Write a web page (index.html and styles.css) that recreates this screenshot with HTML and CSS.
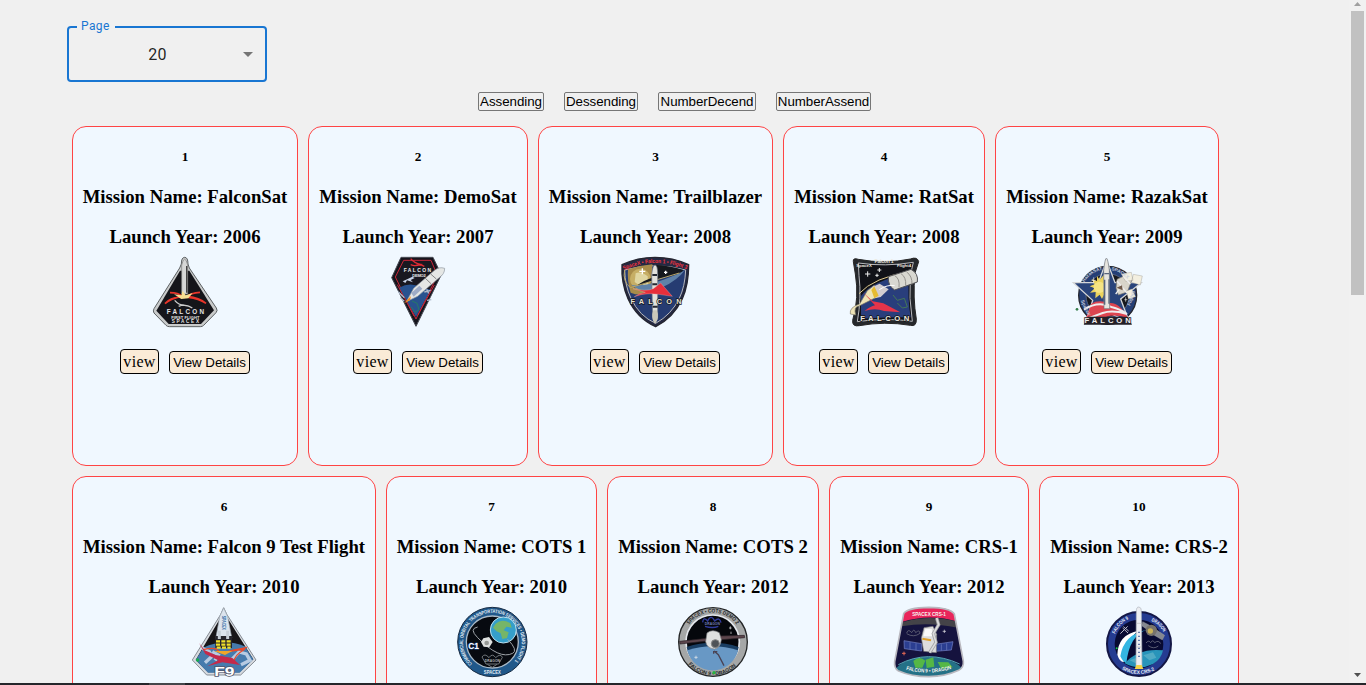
FILE: index.html
```html
<!DOCTYPE html>
<html lang="en">
<head>
<meta charset="utf-8">
<title>Missions</title>
<link rel="stylesheet" href="styles.css">
</head>
<body>
<main class="page">
  <div class="select"><span class="select-label">Page</span><span class="select-value">20</span><svg class="caret" viewBox="0 0 24 24"><path d="M7 10l5 5 5-5z"/></svg></div>
  <div class="sorts"><button class="s1">Assending</button><button class="s2">Dessending</button><button class="s3">NumberDecend</button><button class="s4">NumberAssend</button></div>
  <div class="row">
    <article class="card w226"><h5>1</h5><h3>Mission Name: FalconSat</h3><h3>Launch Year: 2006</h3>
      <svg class="patch" viewBox="0 0 270 255">
        <path d="M124 42Q124 22 134 22Q144 22 144 42L148 54L229 174Q234 182 228 188L191 226Q187 230 181 230H88Q82 230 78 226L42 189Q38 183 42 176L119 54Z" fill="#c9cbcb" stroke="#5c6062" stroke-width="3"/>
        <path d="M120 62H148L222 181L183 222H86L49 182Z" fill="#15151a"/>
        <path d="M125 45Q134 10 143 45V132H125Z" fill="#d6d7d6" stroke="#777" stroke-width="2"/><path d="M140 48V128" stroke="#444" stroke-width="4"/>
        <path d="M90 128Q115 128 126 139Q92 145 75 161Q93 140 122 142M180 127Q151 129 143 139Q178 143 198 160Q176 145 145 142" fill="none" stroke="#e8352a" stroke-width="5"/>
        <path d="M102 133L124 136L128 122L137 136L158 129L145 145L124 147Z" fill="#f8df92"/>
        <path d="M104 151Q116 165 133 166Q147 167 157 174Q135 160 116 169" fill="none" stroke="#ccc" stroke-width="4"/>
        <g fill="#e6e6e6" text-anchor="middle" class="lettering"><text x="136" y="192" font-size="19" textLength="112">FALCON</text><text x="136" y="206" font-size="12" textLength="84">FIRST FLIGHT</text><text x="136" y="220" font-size="14" textLength="82">SPACEX</text></g>
      </svg>
      <div class="actions"><button class="view">view</button><button class="details">View Details</button></div></article>
    <article class="card w220"><h5>2</h5><h3>Mission Name: DemoSat</h3><h3>Launch Year: 2007</h3>
      <svg class="patch" viewBox="-6 0 270 255">
        <path d="M78 22H174L199 74L123 229L50 83Z" fill="#15151d" stroke="#494b55" stroke-width="3"/>
        <path d="M86 31H168L187 76L123 207L61 81Z" fill="#191820" stroke="#c92639" stroke-width="3"/>
        <path d="M72 113Q105 95 137 111L167 119L123 201Z" fill="#28528f"/><path d="M67 104L117 198M178 105L128 196" stroke="#c92639" stroke-width="3"/>
        <path d="M107 26Q118 40 137 43Q120 50 107 44M118 48Q132 41 148 49" fill="none" stroke="#e12b34" stroke-width="4"/>
        <path d="M83 94L98 87L112 80L119 84L107 90L114 97L96 91L91 99Z" fill="#c9d5e9"/>
        <path d="M94 155L116 115L177 62Q192 49 209 55Q209 72 194 82L128 139Z" fill="#e5e7e5" stroke="#8d969e" stroke-width="2"/><path d="M109 129L133 107L142 116L116 140Z" fill="#9eacc7"/><path d="M151 85L168 101M167 72L184 87" stroke="#555" stroke-width="2"/><path d="M87 160L108 138L105 151Z" fill="#ef8b20"/>
        <path d="M111 153L126 160L132 179L120 187L108 170" fill="none" stroke="#267b66" stroke-width="3"/><path d="M148 126L167 121M155 118L161 130M70 125L88 143M76 143L88 154M156 151L169 149" stroke="#b0bbcc" stroke-width="4"/>
        <g fill="#eee" text-anchor="middle" class="lettering"><text x="127" y="67" font-size="15" textLength="82">FALCON</text><text x="132" y="80" font-size="12" textLength="40">DEMO2</text></g>
      </svg><div class="actions"><button class="view">view</button><button class="details">View Details</button></div></article>
    <article class="card w235"><h5>3</h5><h3>Mission Name: Trailblazer</h3><h3>Launch Year: 2008</h3>
      <svg class="patch" viewBox="2 0 270 255">
        <path d="M35 44Q82 22 134 22Q188 22 235 44Q235 104 216 146Q190 202 136 230Q80 205 53 146Q32 98 35 44Z" fill="#242943" stroke="#252630" stroke-width="4"/>
        <path d="M43 60Q134 34 226 60Q224 109 207 145Q183 194 136 220Q87 199 62 145Q44 108 43 60Z" fill="#263c72" stroke="#b7b9be" stroke-width="3"/>
        <path d="M53 58Q50 94 61 128Q103 145 123 112L126 43Q89 46 53 58Z" fill="#a88c4a"/><circle cx="90" cy="87" r="31" fill="#c6ae65"/><path d="M76 70Q92 62 112 79L113 104Q97 115 73 96Z" fill="#e0d6a1"/>
        <path d="M129 44Q180 46 219 60L207 75Q158 77 70 114Q101 88 143 78Z" fill="#16191e"/><path d="M62 104Q115 114 222 62Q203 89 156 112Q97 134 62 104Z" fill="#5f82a8"/><path d="M43 60Q36 94 60 113L207 69" stroke="#b8a66a" fill="none" stroke-width="3"/>
        <path d="M124 75Q127 45 134 45Q142 45 142 75V208Q135 219 127 208Z" fill="#e2e2dd" stroke="#6c7481" stroke-width="2"/><path d="M126 75H140M126 103H140M127 170H142" stroke="#252933" stroke-width="6"/><path d="M129 181Q120 203 134 222Q149 203 139 181Z" fill="#cbc9bb"/>
        <path d="M68 116Q107 125 129 116L151 99L186 139L145 133Q105 127 72 140Q86 130 105 127Z" fill="#e72f3b" stroke="#e9b7b5" stroke-width="1"/><path d="M96 55V73M87 64H105M166 62V72M161 67H171" stroke="#fff" stroke-width="4"/>
        <path id="arc3" d="M40 60Q137 18 231 59" fill="none"/><text class="lettering" font-size="17" fill="#f5343d"><textPath href="#arc3" textLength="194" lengthAdjust="spacingAndGlyphs">SpaceX • Falcon 1 • Flight 3</textPath></text><text class="lettering" x="137" y="163" text-anchor="middle" textLength="153" font-size="22" fill="#e8e3d4" stroke="#151923" stroke-width="4">FALCON</text>
      </svg><div class="actions"><button class="view">view</button><button class="details">View Details</button></div></article>
    <article class="card w202"><h5>4</h5><h3>Mission Name: RatSat</h3><h3>Launch Year: 2008</h3>
      <svg class="patch" viewBox="-3 0 270 255">
        <path d="M40 35Q38 22 55 28Q135 43 211 27Q232 19 236 35L225 69Q218 144 229 207Q230 231 211 226Q134 213 58 227Q36 231 38 211Q58 144 46 72Z" fill="#25282c" stroke="#262626" stroke-width="3"/>
        <path d="M55 39Q135 51 220 37L211 76Q206 145 217 214Q136 202 52 215Q65 143 57 77Z" fill="#111218" stroke="#b8b9bd" stroke-width="3"/>
        <path d="M63 138Q96 93 207 70Q202 151 212 202Q135 200 63 206Z" fill="#293e7c"/><path d="M57 131Q100 83 211 64" stroke="#dfc98e" stroke-width="3" fill="none"/>
        <path d="M31 192Q27 172 59 162L82 122L103 106L113 140L91 151L57 168Q40 170 47 195Z" fill="#eee4b6" stroke="#7f7967" stroke-width="2"/><path d="M97 111L119 101L146 118L122 141L104 145Z" fill="#d3cdd0"/><path d="M103 109L116 137L103 145L94 120Z" fill="#e6bb31"/>
        <path d="M145 80L213 58Q236 70 232 96L164 120Q143 108 145 80Z" fill="#d8d8d1" stroke="#505156" stroke-width="3"/><path d="M164 77Q180 85 177 112M183 71Q199 81 197 107M200 66Q217 78 216 103" stroke="#94928d" stroke-width="3" fill="none"/><path d="M118 119Q142 103 164 107" fill="none" stroke="#fff" stroke-width="3"/>
        <path d="M68 126L98 154L130 160L181 187L132 183Q105 173 74 183Q91 169 105 166Z" fill="#e5344a"/><path d="M159 135L172 151L193 145L202 171L187 174L172 159" stroke="#437756" fill="none" stroke-width="3"/><path d="M83 64V80M75 72H91M118 54V66M112 60H124M111 71V81M106 76H116" stroke="#eee" stroke-width="3"/>
        <g fill="#eeeae0" text-anchor="middle" class="lettering"><text x="132" y="38" font-size="15" textLength="57">Falcon 1</text><text x="72" y="52" font-size="13">SpaceX</text><text x="192" y="50" font-size="13">Flight4</text><text x="134" y="213" font-size="23" textLength="147" stroke="#151515" stroke-width="4">FALCON</text></g>
      </svg><div class="actions"><button class="view">view</button><button class="details">View Details</button></div></article>
    <article class="card w224"><h5>5</h5><h3>Mission Name: RazakSat</h3><h3>Launch Year: 2009</h3>
      <svg class="patch" viewBox="0 0 270 255">
        <circle cx="137" cy="136" r="87" fill="#243f76" stroke="#24252e" stroke-width="4"/><circle cx="137" cy="136" r="65" fill="#17191e" stroke="#6d7894" stroke-width="2"/>
        <path d="M34 98H109L134 31L159 98H238L176 147L202 217L135 186L70 221L92 151Z" fill="#29447b" stroke="#d5d7d8" stroke-width="4"/>
        <path d="M127 73L113 89L105 78V93L89 88L98 103L83 109L98 115L84 128L101 126L100 145L113 134L120 147L128 130Z" fill="#ebd35d"/><circle cx="112" cy="112" r="17" fill="#f5e483"/>
        <path d="M73 202L88 161Q108 148 143 159Q174 157 199 206Q150 184 104 214Z" fill="#dd4550"/><path d="M66 179Q109 151 151 172Q171 176 195 192Q151 179 122 189L78 205" fill="none" stroke="#eeeced" stroke-width="6"/>
        <path d="M125 61Q133 -12 142 61L143 176H126Z" fill="#e7e5df" stroke="#696f79" stroke-width="2"/><path d="M127 71H141M128 89V164M141 88V161" stroke="#57647b" stroke-width="4"/>
        <path d="M165 88L192 75L209 91L196 126L169 135L162 114Z" fill="#d9d5ca" stroke="#77766f" stroke-width="2"/><path d="M178 72L208 67L213 91L191 94ZM214 73L241 78L235 105L208 97ZM193 123L209 117L221 140L199 147Z" fill="#f3efe0" stroke="#88857e"/><path d="M165 93L195 129M184 79L205 102M171 119L161 132" stroke="#eee" stroke-width="4"/><path d="M164 113L180 106L182 121Z" fill="#705948"/>
        <path id="arc5a" d="M67 97Q86 65 122 60" fill="none"/><path id="arc5b" d="M148 60Q187 70 208 101" fill="none"/><g class="lettering" fill="#c4ccda" font-size="14"><text><textPath href="#arc5a">RazakSAT</textPath></text><text><textPath href="#arc5b">SPACEX</textPath></text><text x="54" y="156" transform="rotate(65 58 156)">SpaceX</text><text x="204" y="168" transform="rotate(-70 204 168)">Flight5</text></g>
        <path d="M78 200H197L210 224H65Z" fill="#211f27"/><text class="lettering" x="137" y="219" text-anchor="middle" textLength="139" font-size="23" fill="#eee" stroke="#29242b" stroke-width="5">FALCON</text><path d="M95 82V100M89 91H101M191 142V155M187 149H196" stroke="#eee" stroke-width="2"/><circle cx="45" cy="178" r="4" fill="#347d4a"/>
      </svg><div class="actions"><button class="view">view</button><button class="details">View Details</button></div></article>
  </div>
  <div class="row">
    <article class="card w304"><h5>6</h5><h3>Mission Name: Falcon 9 Test Flight</h3><h3>Launch Year: 2010</h3>
      <svg class="patch" viewBox="-3 0 270 255">
        <path d="M121 45L131 23L141 44L228 180L182 225H80L37 180Z" fill="#d8dce1" stroke="#858b93" stroke-width="3"/><path d="M124 49L131 33L139 49L220 178L178 217H84L47 180Z" fill="#171518"/><path d="M70 143Q132 112 194 139L220 178L179 218H84L47 180Z" fill="#467bad"/><path d="M67 145L88 155L96 169L75 188M97 155L115 165L105 181M157 177L177 156L199 162L210 181L183 194" fill="none" stroke="#b7cbe2" stroke-width="10"/>
        <path d="M119 50L131 24L143 50L155 112L148 143H114L108 112Z" fill="#dce4ed" stroke="#9da7b0" stroke-width="2"/><text x="127" y="47" class="lettering" transform="rotate(90 127 47)" font-size="15" textLength="43" lengthAdjust="spacingAndGlyphs" fill="#326ca6">SPACEX</text><path d="M106 108H156V144H106Z" fill="#25242b"/><path d="M108 124H154M108 134H154M110 143H152" stroke="#efe02a" stroke-width="7" stroke-dasharray="12 4"/><path d="M118 92V117M143 92V117" stroke="#c7cfd8" stroke-width="9"/>
        <path d="M70 149Q112 138 117 157M201 142Q155 151 143 155L195 147Q160 168 163 185" fill="none" stroke="#e94a2a" stroke-width="4"/><path d="M102 153H157L135 165Z" fill="#f0a629"/><path d="M57 129L74 151L107 165L157 174L180 195L127 187L82 199L115 181L76 162Z" fill="#c42a4a"/><circle cx="53" cy="180" r="5" fill="#17ae4d"/><text x="133" y="227" text-anchor="middle" font-size="36" textLength="61" lengthAdjust="spacingAndGlyphs" class="lettering" fill="#fff" stroke="#51566b" stroke-width="4">F9</text>
      </svg></article>
    <article class="card w211"><h5>7</h5><h3>Mission Name: COTS 1</h3><h3>Launch Year: 2010</h3>
      <svg class="patch" viewBox="-1 0 270 255"><circle cx="135" cy="126" r="104" fill="#20588a" stroke="#172b43" stroke-width="3"/><circle cx="135" cy="126" r="78" fill="#070a10" stroke="#a9b9c7" stroke-width="4"/><circle cx="168" cy="90" r="39" fill="#359fca" stroke="#bde0ee" stroke-width="3"/><path d="M145 71Q164 54 189 70L193 83L177 80L169 91L184 97L179 114L165 117L160 100L148 94L137 83Z" fill="#76b568"/><path d="M91 81Q64 86 91 113Q156 180 196 160Q213 151 181 118" fill="none" stroke="#9fa4a9" stroke-width="3"/><path d="M108 115L125 111L136 126L126 142L109 140L101 126Z" fill="#dfe1e0"/><circle cx="118" cy="129" r="7" fill="#969895"/>
      <text x="63" y="147" font-size="27" textLength="32" lengthAdjust="spacingAndGlyphs" class="lettering" fill="#fff" stroke="#274a8b" stroke-width="3">C1</text><path d="M104 171Q112 158 125 173Q135 158 145 173Q160 159 165 172L154 192H116ZM120 193L135 202L149 193" fill="none" stroke="#70767a" stroke-width="3"/><text class="lettering" x="135" y="186" text-anchor="middle" font-size="10" textLength="46" fill="#b5b9bc">DRAGON</text>
      <path id="arc7" d="M75 191A88 88 0 1 1 195 191" fill="none"/><text class="lettering" font-size="15" fill="#e2edf5"><textPath href="#arc7" textLength="410" lengthAdjust="spacingAndGlyphs">COMMERCIAL ORBITAL TRANSPORTATION SERVICES • DEMO FLIGHT 1</textPath></text><text class="lettering" x="135" y="223" text-anchor="middle" font-size="15" textLength="51" lengthAdjust="spacingAndGlyphs" fill="#e2edf5">SPACEX</text></svg></article>
    <article class="card w212"><h5>8</h5><h3>Mission Name: COTS 2</h3><h3>Launch Year: 2012</h3>
      <svg class="patch" viewBox="0 0 270 255"><circle cx="135" cy="126" r="103" fill="#a5a7a7" stroke="#232526" stroke-width="4"/><circle cx="134" cy="125" r="80" fill="#05070c" stroke="#e4e8ed" stroke-width="5"/><path d="M56 141Q134 116 212 141A79 79 0 0 1 56 141Z" fill="#193e63"/><path d="M58 151Q134 126 210 151A78 78 0 0 1 58 151Z" fill="#6898c5"/><path d="M35 124L117 115V123L36 132ZM151 108L229 106L230 113L152 120Z" fill="#5c454c" stroke="#281f26" stroke-width="2"/><path d="M117 99Q133 86 154 98L160 119Q157 145 139 147Q117 145 113 125Z" fill="#dedfdf" stroke="#828486" stroke-width="2"/><circle cx="142" cy="131" r="12" fill="#4f5358" stroke="#858585" stroke-width="3"/><path d="M138 153L151 164L168 197M137 153V161M138 155H148" fill="none" stroke="#4a4354" stroke-width="4"/><path d="M104 67Q106 48 119 63Q129 41 140 63Q155 49 159 68M111 79Q134 86 151 79" fill="none" stroke="#303b9c" stroke-width="4"/><text class="lettering" x="133" y="75" text-anchor="middle" font-size="10" textLength="45" fill="#737db7">DRAGON</text><path d="M187 79V88M183 84H191M189 95V102M84 167V177M79 172H89" stroke="#eee" stroke-width="2"/>
      <path id="arc8" d="M63 74A88 88 0 0 1 207 76" fill="none"/><path id="arc8b" d="M61 193A99 99 0 0 0 209 193" fill="none"/><g class="lettering" font-size="16" fill="#252729"><text><textPath href="#arc8" textLength="166" lengthAdjust="spacingAndGlyphs">SPACEX • COTS DEMO 2</textPath></text><text><textPath href="#arc8b" textLength="160" lengthAdjust="spacingAndGlyphs">FALCON 9 • DRAGON</textPath></text></g><circle cx="138" cy="218" r="5" fill="#24b443"/></svg></article>
    <article class="card w200"><h5>9</h5><h3>Mission Name: CRS-1</h3><h3>Launch Year: 2012</h3>
      <svg class="patch" viewBox="-3 0 270 255"><defs><clipPath id="crs"><path d="M56 41Q66 23 132 22Q196 23 208 42L235 184Q237 202 221 211Q180 230 132 230Q80 230 39 212Q27 204 29 185Z"/></clipPath></defs><g clip-path="url(#crs)"><path d="M20 20H240V230H20Z" fill="#15133e"/><path d="M45 20H220V65Q133 39 50 66Z" fill="#e9255b"/><path d="M51 67Q131 43 214 64L218 83Q130 64 50 79Z" fill="#444348"/><ellipse cx="132" cy="224" rx="106" ry="53" fill="#247187"/><path d="M85 183Q103 166 121 182L112 203L91 203ZM122 179L145 172L148 200L125 204ZM158 186L190 187L203 202L169 207Z" fill="#55b745"/><path d="M40 194Q128 147 224 192" fill="none" stroke="#57a9b6" stroke-width="3"/></g>
      <path d="M57 122L110 131V153L58 146ZM151 133L204 125L199 150L151 154Z" fill="#2b3e91" stroke="#7484c7" stroke-width="2"/><path d="M75 127V148M93 130V151M169 133V152M185 130V151" stroke="#7180bf" stroke-width="2"/><path d="M117 83L144 79L155 103L154 158L116 154L109 114Z" fill="#ddd" stroke="#777" stroke-width="2"/><path d="M121 87L140 87L143 109H115Z" fill="#fafafa"/><path d="M112 116L138 121" stroke="#e0a02b" stroke-width="6"/><path d="M155 54L161 74L145 101L153 127L134 158" stroke="#a2a3a6" stroke-width="10" fill="none"/><path d="M155 54L161 74L145 101L153 127L134 158" stroke="#ddd" stroke-width="5" fill="none"/>
      <path d="M65 99Q70 85 80 98Q87 83 92 98Q104 87 105 100Q86 114 65 101" fill="none" stroke="#777887" stroke-width="2"/><path d="M57 155V166M51 160H62" stroke="#e96a55" stroke-width="3"/><path d="M178 89V99M173 94H183" stroke="#eee" stroke-width="2"/><path d="M56 41Q66 23 132 22Q196 23 208 42L235 184Q237 202 221 211Q180 230 132 230Q80 230 39 212Q27 204 29 185Z" fill="none" stroke="#b9b8bf" stroke-width="5"/>
      <path id="arc9" d="M63 209Q132 228 206 205" fill="none"/><g class="lettering" fill="#f7f3ee" font-size="16"><text x="132" y="49" text-anchor="middle" textLength="101" lengthAdjust="spacingAndGlyphs">SPACEX CRS-1</text><text><textPath href="#arc9" textLength="138" lengthAdjust="spacingAndGlyphs">FALCON 9 • DRAGON</textPath></text></g></svg></article>
    <article class="card w200"><h5>10</h5><h3>Mission Name: CRS-2</h3><h3>Launch Year: 2013</h3>
      <svg class="patch" viewBox="-3 0 270 255"><circle cx="132" cy="132" r="96" fill="#253b91" stroke="#141746" stroke-width="6"/><circle cx="132" cy="132" r="73" fill="#080a32"/><path d="M67 164Q69 103 131 92Q94 116 86 187Q73 184 67 164Z" fill="#fff"/><path d="M76 169Q86 104 153 90Q103 108 94 190Q84 186 76 169Z" fill="#34b6e2"/><path d="M89 190Q131 143 204 151Q199 178 174 192Q131 213 89 190Z" fill="#2894ba"/><path d="M104 181L122 174L127 192ZM145 166L174 157L184 173L163 181Z" fill="#50aac5"/><path d="M124 34Q124 20 132 21Q140 22 139 35L141 199H123Z" fill="#eceef2" stroke="#aeb3bc" stroke-width="2"/><path d="M124 70H140M124 141H140" stroke="#bbb" stroke-width="2"/><path d="M132 95V174" stroke="#4b66a1" stroke-width="5" stroke-dasharray="4 8"/><path d="M124 195H140L145 207H119Z" fill="#f4d34b"/>
      <path d="M143 65L164 76L157 89L140 77ZM181 87L209 106L202 120L175 104Z" fill="#858890" stroke="#aaa"/><circle cx="169" cy="91" r="17" fill="#77736c"/><circle cx="166" cy="93" r="8" fill="#c9b25a"/><path d="M76 101L98 79M83 84L99 99M85 80L101 93" stroke="#b8b8c8" stroke-width="3"/><path d="M153 129Q161 119 167 128Q173 117 179 128Q191 119 197 131M160 137Q176 149 190 138" fill="none" stroke="#828491" stroke-width="2"/><circle cx="65" cy="145" r="3" fill="#18ca49"/>
      <path id="arc10a" d="M60 102Q74 67 106 56" fill="none"/><path id="arc10b" d="M169 63Q192 72 208 100" fill="none"/><path id="arc10c" d="M80 208Q130 236 183 208" fill="none"/><g class="lettering" fill="#eef2f8" font-size="15"><text><textPath href="#arc10a" textLength="62" lengthAdjust="spacingAndGlyphs">FALCON 9</textPath></text><text><textPath href="#arc10b" textLength="50" lengthAdjust="spacingAndGlyphs">DRAGON</textPath></text><text><textPath href="#arc10c" textLength="103" lengthAdjust="spacingAndGlyphs">SPACEX CRS-2</textPath></text></g></svg></article>
  </div>
</main>
<div class="scrollbar"><svg width="17" height="8"><path d="M8.5 1L12 5H5Z" fill="#a0a0a0"/></svg><div class="thumb"></div><svg class="down" width="17" height="8"><path d="M5 1H12L8.5 5Z" fill="#505050"/></svg></div>
<div class="taskbar"></div>
</body>
</html>
```
FILE: styles.css
```css
* { box-sizing: border-box; }
html, body { height: 685px; overflow: hidden; }
body { margin: 0; background: #f0f0f0; color: #000; font-family: "Liberation Serif", serif; }
.page { height: 685px; overflow: hidden; padding: 26px 0 0 67px; }
.select { position: relative; width: 200px; height: 56px; border: 2px solid #1976d2; border-radius: 4px; display: flex; align-items: center; justify-content: center; padding-right: 19px; font: 16px Roboto, sans-serif; letter-spacing: .15px; color: rgba(0,0,0,.87); }
.select-label { position: absolute; left: 8px; top: -9px; padding: 0 5px 0 4px; background: #f0f0f0; font-size: 12px; color: #1976d2; line-height: 14px; letter-spacing: .4px; }
.caret { position: absolute; right: 5px; top: 14px; width: 24px; height: 24px; fill: #757575; }
.sorts { display: flex; gap: 20px; margin: 10px 0 15px 411px; }
button { font-family: "Liberation Sans", sans-serif; font-size: 13.333px; color: #000; white-space: nowrap; }
.sorts button { height: 19px; padding: 0; border: 1px solid #767676; border-radius: 2px; background: #efefef; line-height: 15px; letter-spacing: -.04px; }
.s1 { width: 66px; }
.s2 { width: 74px; }
.s3 { width: 98px; }
.s4 { width: 95px; }
.row { display: flex; gap: 10px; padding-left: 5px; margin-bottom: 10px; }
.card { height: 340px; border: 1px solid #f44; border-radius: 14px; background: #f0f8ff; display: flex; flex-direction: column; align-items: center; flex: none; }
.w226 { width: 226px; } .w220 { width: 220px; } .w235 { width: 235px; } .w202 { width: 202px; } .w224 { width: 224px; }
.w304 { width: 304px; } .w211 { width: 211px; } .w212 { width: 212px; } .w200 { width: 200px; }
h5, h3 { margin: 0; white-space: nowrap; }
h5 { font-size: 13.28px; line-height: 15px; margin: 22px 0; }
h3 { font-size: 18.72px; line-height: 21px; }
h3 + h3 { margin-top: 19px; }
.patch { width: 90px; height: 85px; margin-top: 3px; flex: none; }
.lettering { font-family: "Liberation Sans", sans-serif; font-weight: bold; paint-order: stroke; }
.actions { display: flex; gap: 10px; align-items: center; margin-top: 14px; }
.w235 .actions { margin-left: -1px; }
.actions button { border: 1px solid #000; border-radius: 4px; background: antiquewhite; padding: 0; }
.actions .view { width: 39px; height: 25px; font: 16px "Liberation Serif", serif; letter-spacing: .3px; }
.actions .details { width: 81px; height: 23px; margin-top: 2px; letter-spacing: -.04px; }
.scrollbar { position: absolute; top: 0; right: 0; width: 17px; height: 683px; display: flex; flex-direction: column; background: #f1f1f1; }
.scrollbar svg { display: block; margin-top: 1px; }
.thumb { width: 13px; height: 284px; margin: 2px 0 0 2px; background: #c1c1c1; }
.scrollbar .down { margin-top: auto; margin-bottom: 3px; }
.taskbar { position: absolute; left: 0; right: 0; bottom: 0; height: 2px; background: linear-gradient(90deg, #25262b 149px, #45464a 149px 185px, #25262b 185px); }
```
